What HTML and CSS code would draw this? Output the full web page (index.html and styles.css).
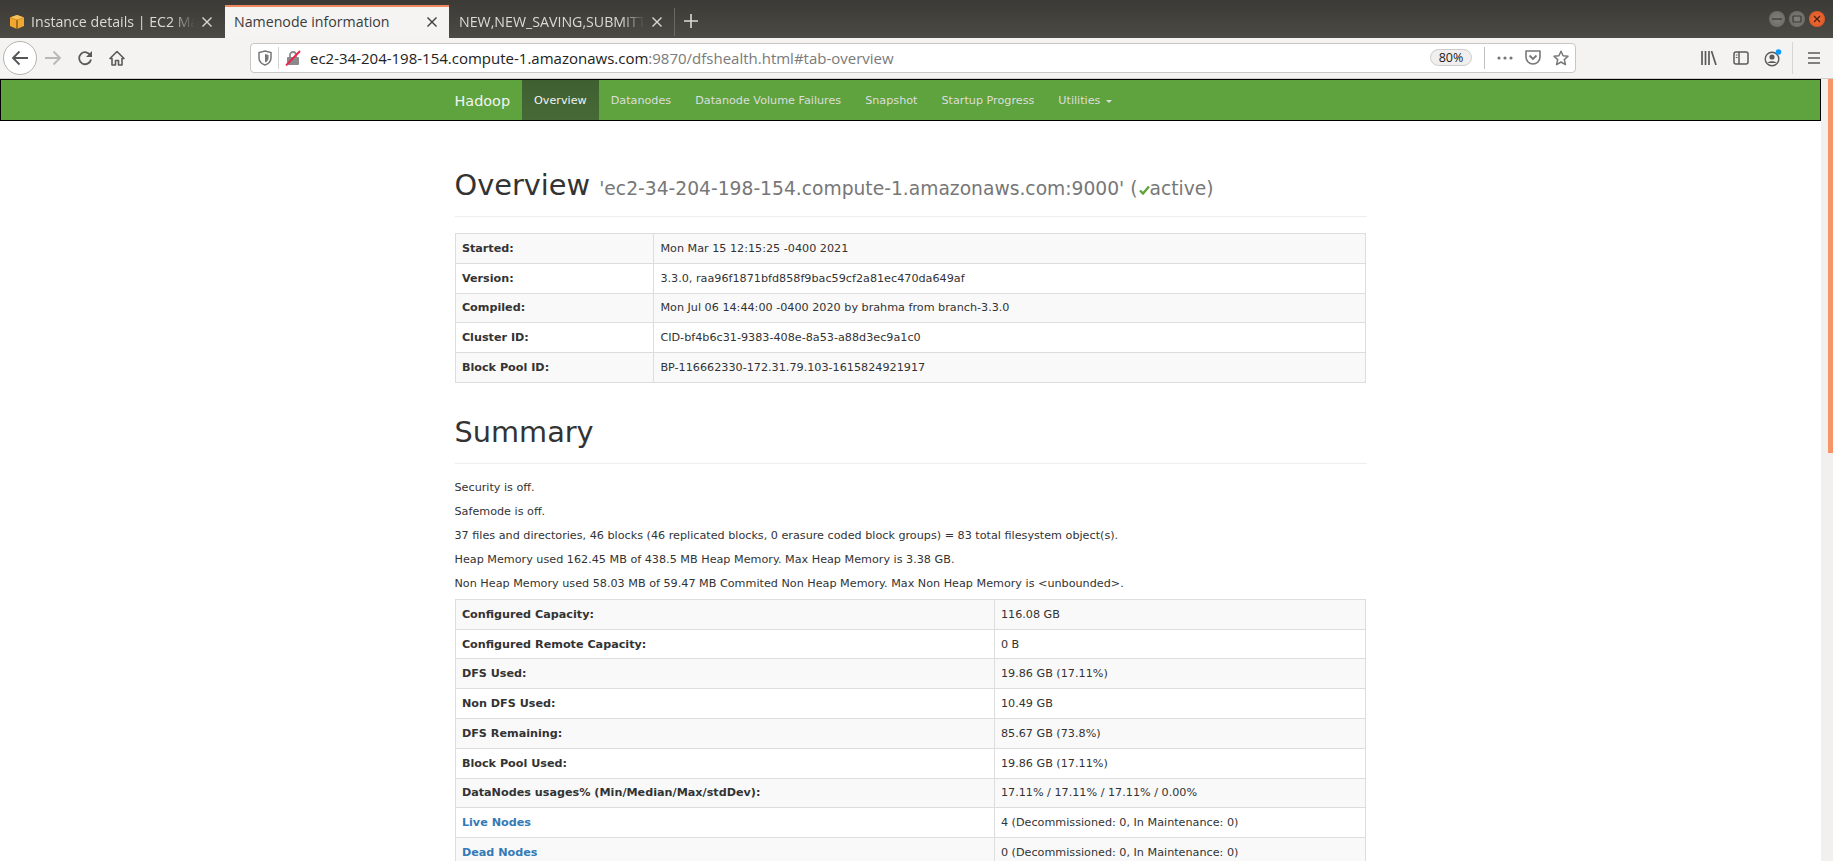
FILE: index.html
```
<!DOCTYPE html>
<html lang="en">
<head>
<meta charset="utf-8">
<title>Namenode information</title>
<link rel="stylesheet" href="styles.css">
</head>
<body>
<div class="titlebar">
  <div class="tab">
    <svg class="favicon" width="16" height="16" viewBox="0 0 16 16"><path d="M8 1 15 3.500V12L8 15 1 12V3.500Z" fill="#f2a82e"/><path d="M1 3.500 8 1 15 3.500 8 6Z" fill="#f8c25a"/><path d="M8 6V15" stroke="#6b4a16" stroke-width="1.200"/><path d="M1 3.500 8 6 15 3.500" fill="none" stroke="#c27f1e" stroke-width=".7"/></svg>
    <span class="tab-label">Instance details | EC2 Management Console</span>
    <svg class="tab-close" width="12" height="12" viewBox="0 0 12 12"><path d="M1.500 1.500 10.500 10.500M10.500 1.500 1.500 10.500" stroke="currentColor" stroke-width="1.400"/></svg>
  </div>
  <div class="tab tab-active">
    <span class="tab-label">Namenode information</span>
    <svg class="tab-close" width="12" height="12" viewBox="0 0 12 12"><path d="M1.500 1.500 10.500 10.500M10.500 1.500 1.500 10.500" stroke="currentColor" stroke-width="1.400"/></svg>
  </div>
  <div class="tab tab-last">
    <span class="tab-label">NEW,NEW_SAVING,SUBMITTED,ACCEPTED</span>
    <svg class="tab-close" width="12" height="12" viewBox="0 0 12 12"><path d="M1.500 1.500 10.500 10.500M10.500 1.500 1.500 10.500" stroke="currentColor" stroke-width="1.400"/></svg>
  </div>
  <svg class="new-tab" width="14" height="14" viewBox="0 0 14 14"><path d="M7 0V14M0 7H14" stroke="#dcdad5" stroke-width="1.600"/></svg>
  <div class="win-controls">
    <span class="win-btn"><svg width="10" height="10" viewBox="0 0 10 10"><path d="M0 5H10" stroke="#3c3b37" stroke-width="1.300"/></svg></span>
    <span class="win-btn"><svg width="10" height="10" viewBox="0 0 10 10"><rect x="1" y="2" width="8" height="6" rx="1" fill="none" stroke="#3c3b37" stroke-width="1.200"/></svg></span>
    <span class="win-btn win-close"><svg width="10" height="10" viewBox="0 0 10 10"><path d="M2 2 8 8M8 2 2 8" stroke="#4a2010" stroke-width="1.400"/></svg></span>
  </div>
</div>

<div class="toolbar">
  <span class="back-btn"><svg width="18" height="16" viewBox="0 0 18 16"><path d="M17 8H2M8.500 1.500 2 8l6.500 6.500" fill="none" stroke="#555" stroke-width="1.800"/></svg></span>
  <span class="tool-btn"><svg width="18" height="16" viewBox="0 0 18 16"><path d="M1 8H16M9.500 1.500 16 8l-6.500 6.500" fill="none" stroke="#b8b8b6" stroke-width="1.800"/></svg></span>
  <span class="tool-btn"><svg width="16" height="16" viewBox="0 0 16 16"><path d="M13.500 5.500A6 6 0 1 0 14 9.500" fill="none" stroke="#5b5b5b" stroke-width="1.800"/><path d="M15 1V7H9Z" fill="#5b5b5b"/></svg></span>
  <span class="tool-btn"><svg width="16" height="16" viewBox="0 0 16 16"><path d="M8 1.500 1 8.500H3V15H6.500V10.500H9.500V15H13V8.500H15Z" fill="none" stroke="#5b5b5b" stroke-width="1.600" stroke-linejoin="round"/></svg></span>

  <div class="urlbar">
    <span class="url-icon"><svg width="14" height="16" viewBox="0 0 14 16"><path d="M7 1 13 2.500V8C13 12 9.500 14.500 7 15 4.500 14.500 1 12 1 8V2.500Z" fill="none" stroke="#777" stroke-width="1.500"/><path d="M7 4 10.500 5V8C10.500 10.500 8.500 12 7 12.500Z" fill="#777"/></svg></span>
    <span class="url-sep"></span>
    <span class="url-icon"><svg width="16" height="16" viewBox="0 0 16 16"><rect x="2" y="7" width="12" height="8" rx="1" fill="#8a8a8a"/><path d="M5 7V5a3 3 0 0 1 6 0V7" fill="none" stroke="#8a8a8a" stroke-width="1.800"/><path d="M1 15.500 15 1" stroke="#f0204a" stroke-width="1.800"/></svg></span>
    <span class="url-text">ec2-34-204-198-154.compute-1.amazonaws.com<span class="url-dim">:9870/dfshealth.html#tab-overview</span></span>
    <span class="zoom-pill">80%</span>
    <span class="url-sep url-sep-wide"></span>
    <span class="page-btn"><svg width="16" height="4" viewBox="0 0 16 4"><circle cx="2" cy="2" r="1.600" fill="#777"/><circle cx="8" cy="2" r="1.600" fill="#777"/><circle cx="14" cy="2" r="1.600" fill="#777"/></svg></span>
    <span class="page-btn"><svg width="16" height="15" viewBox="0 0 16 15"><path d="M1 1H15V7A7 7 0 0 1 1 7Z" fill="none" stroke="#777" stroke-width="1.600" stroke-linejoin="round"/><path d="M4.500 5.500 8 9l3.500-3.500" fill="none" stroke="#777" stroke-width="1.800"/></svg></span>
    <span class="page-btn"><svg width="16" height="16" viewBox="0 0 16 16"><path d="M8 1.200 10.100 5.800 15 6.300 11.300 9.600 12.400 14.600 8 12 3.600 14.600 4.700 9.600 1 6.300 5.900 5.800Z" fill="none" stroke="#777" stroke-width="1.500" stroke-linejoin="round"/></svg></span>
  </div>

  <div class="tool-right">
    <span class="tool-btn"><svg width="16" height="14" viewBox="0 0 16 14"><path d="M1 0V14M4.500 0V14M8 0V14M10.500 0 15 14" fill="none" stroke="#5b5b5b" stroke-width="1.700"/></svg></span>
    <span class="tool-btn"><svg width="16" height="14" viewBox="0 0 16 14"><rect x="1" y="1" width="14" height="12" rx="2" fill="none" stroke="#5b5b5b" stroke-width="1.500"/><path d="M6 1V13" stroke="#5b5b5b" stroke-width="1.500"/><path d="M2.800 4H4.500M2.800 6.500H4.500" stroke="#5b5b5b" stroke-width="1"/></svg></span>
    <span class="tool-btn account"><svg width="18" height="18" viewBox="0 0 18 18"><circle cx="8" cy="10" r="6.800" fill="none" stroke="#5b5b5b" stroke-width="1.400"/><circle cx="8" cy="8" r="2.600" fill="#5b5b5b"/><path d="M3.500 14C4.500 11.500 11.500 11.500 12.500 14Z" fill="#5b5b5b"/><circle cx="14.500" cy="3" r="2.800" fill="#0a9dff"/></svg></span>
    <span class="tool-sep"></span>
    <span class="tool-btn menu-btn"><svg width="14" height="12" viewBox="0 0 14 12"><path d="M1 1H13M1 6H13M1 11H13" stroke="#5b5b5b" stroke-width="1.700"/></svg></span>
  </div>
</div>

<div class="viewport">
  <div class="page">
    <nav class="navbar">
      <div class="nav-inner">
        <a class="brand">Hadoop</a>
        <a class="nav-link nav-active">Overview</a>
        <a class="nav-link">Datanodes</a>
        <a class="nav-link">Datanode Volume Failures</a>
        <a class="nav-link">Snapshot</a>
        <a class="nav-link">Startup Progress</a>
        <a class="nav-link">Utilities <span class="caret"></span></a>
      </div>
    </nav>
    <main class="container">
      <div class="page-header">
        <h1 class="page-title">Overview <small class="title-small">'ec2-34-204-198-154.compute-1.amazonaws.com:9000' (<svg class="check" width="13" height="10" viewBox="0 0 11 10"><path d="M1 5.500 4 8.500 10 1.500" fill="none" stroke="#5fa33e" stroke-width="2.400"/></svg>active)</small></h1>
      </div>
      <table class="info-table">
        <tbody>
          <tr><th class="col-a">Started:</th><td>Mon Mar 15 12:15:25 -0400 2021</td></tr>
          <tr><th>Version:</th><td>3.3.0, raa96f1871bfd858f9bac59cf2a81ec470da649af</td></tr>
          <tr><th>Compiled:</th><td>Mon Jul 06 14:44:00 -0400 2020 by brahma from branch-3.3.0</td></tr>
          <tr><th>Cluster ID:</th><td>CID-bf4b6c31-9383-408e-8a53-a88d3ec9a1c0</td></tr>
          <tr><th>Block Pool ID:</th><td>BP-116662330-172.31.79.103-1615824921917</td></tr>
        </tbody>
      </table>
      <div class="page-header header-summary">
        <h1 class="page-title">Summary</h1>
      </div>
      <p class="line">Security is off.</p>
      <p class="line">Safemode is off.</p>
      <p class="line">37 files and directories, 46 blocks (46 replicated blocks, 0 erasure coded block groups) = 83 total filesystem object(s).</p>
      <p class="line">Heap Memory used 162.45 MB of 438.5 MB Heap Memory. Max Heap Memory is 3.38 GB.</p>
      <p class="line line-last">Non Heap Memory used 58.03 MB of 59.47 MB Commited Non Heap Memory. Max Non Heap Memory is &lt;unbounded&gt;.</p>
      <table class="info-table">
        <tbody>
          <tr><th class="col-b">Configured Capacity:</th><td>116.08 GB</td></tr>
          <tr><th>Configured Remote Capacity:</th><td>0 B</td></tr>
          <tr><th>DFS Used:</th><td>19.86 GB (17.11%)</td></tr>
          <tr><th>Non DFS Used:</th><td>10.49 GB</td></tr>
          <tr><th>DFS Remaining:</th><td>85.67 GB (73.8%)</td></tr>
          <tr><th>Block Pool Used:</th><td>19.86 GB (17.11%)</td></tr>
          <tr><th>DataNodes usages% (Min/Median/Max/stdDev):</th><td>17.11% / 17.11% / 17.11% / 0.00%</td></tr>
          <tr><th><a class="table-link">Live Nodes</a></th><td>4 (Decommissioned: 0, In Maintenance: 0)</td></tr>
          <tr><th><a class="table-link">Dead Nodes</a></th><td>0 (Decommissioned: 0, In Maintenance: 0)</td></tr>
        </tbody>
      </table>
    </main>
  </div>
  <div class="scrollbar"><div class="thumb"></div></div>
</div>
</body>
</html>
```
FILE: styles.css
```
* { box-sizing: border-box; }
html, body { height: 100%; }
body {
  margin: 0;
  height: 861px;
  overflow: hidden;
  display: flex;
  flex-direction: column;
  font-family: "DejaVu Sans", sans-serif;
  font-size: 11.2px;
  line-height: 16px;
  color: #333;
  background: #fff;
}

/* Title bar and tabs */
.titlebar {
  height: 38px;
  flex: none;
  display: flex;
  align-items: flex-end;
  background: linear-gradient(#3b3a36, #4b4a44);
  font-family: "Open Sans", "Noto Sans", sans-serif;
  font-size: 14.2px;
}
.tab {
  width: 225px;
  height: 33px;
  padding: 0 12px 0 9px;
  display: flex;
  align-items: center;
  color: #dcdad5;
}
.tab-active {
  width: 224px;
  height: 33px;
  background: #f5f4f2;
  color: #3b3b3b;
  border-top: 2px solid #f0875f;
  padding: 0 11px 1px 9px;
}
.tab-last {
  border-right: 1px solid #6a6964;
  padding-left: 10px;
  height: 28px;
  margin-bottom: 2px;
  width: 226px;
  padding-right: 11px;
}
.favicon { flex: none; margin-right: 6px; }
.tab-label {
  flex: 1;
  min-width: 0;
  white-space: nowrap;
  overflow: hidden;
  -webkit-mask-image: linear-gradient(to left, transparent 0, #000 24px);
  mask-image: linear-gradient(to left, transparent 0, #000 24px);
}
.tab-active .tab-label { -webkit-mask-image: none; mask-image: none; }
.tab-close { flex: none; margin-left: 6px; color: currentColor; }
.new-tab { margin: 0 0 10px 9px; }
.win-controls {
  margin-left: auto;
  padding: 0 8px 11px 0;
  display: flex;
  gap: 4px;
  align-self: flex-end;
}
.win-btn {
  width: 16px;
  height: 16px;
  border-radius: 50%;
  background: radial-gradient(#807f7a, #67665f);
  display: flex;
  align-items: center;
  justify-content: center;
}
.win-close { background: radial-gradient(#f0703a, #d8501f); }

/* Toolbar */
.toolbar {
  height: 41px;
  flex: none;
  display: flex;
  align-items: center;
  padding: 0 0 1px 3px;
  background: #f4f3f1;
  border-bottom: 1px solid #cfcdca;
}
.back-btn {
  width: 34px;
  height: 34px;
  border: 1px solid #b5b3b0;
  border-radius: 50%;
  background: #fff;
  display: flex;
  align-items: center;
  justify-content: center;
}
.tool-btn {
  width: 32px;
  height: 32px;
  flex: none;
  display: flex;
  align-items: center;
  justify-content: center;
}
.urlbar {
  width: 1326px;
  height: 30px;
  margin-left: 117px;
  flex: none;
  display: flex;
  align-items: center;
  background: #fff;
  border: 1px solid #c9c7c4;
  border-radius: 4px;
  padding-left: 4px;
  font-family: "Open Sans", "Noto Sans", sans-serif;
  font-size: 15px;
  color: #222;
}
.url-icon {
  width: 20px;
  display: flex;
  justify-content: center;
}
.url-sep {
  width: 1px;
  height: 22px;
  background: #d5d3d0;
  margin: 0 4px 0 3px;
}
.url-sep-wide { margin: 0 6px 0 12px; background: #c2c0bd; }
.url-text { margin-left: 7px; white-space: nowrap; }
.url-dim { color: #7a7a7a; }
.zoom-pill {
  margin-left: auto;
  width: 42px;
  height: 17px;
  border: 1px solid #ccc;
  border-radius: 9px;
  background: #f0efed;
  font-size: 12.500px;
  line-height: 15px;
  text-align: center;
}
.page-btn {
  width: 28px;
  display: flex;
  justify-content: center;
}
.tool-right {
  margin-left: 117px;
  display: flex;
  align-items: center;
}
.tool-sep {
  width: 1px;
  height: 32px;
  margin-left: 3px;
  background: #d8d6d3;
}
.menu-btn { margin-left: 5px; }

/* Page */
.viewport {
  flex: 1;
  min-height: 0;
  display: flex;
}
.page { flex: 1; min-width: 0; overflow: hidden; }
.scrollbar {
  width: 12px;
  flex: none;
  display: flex;
  justify-content: flex-end;
  background: #f1f0ee;
}
.thumb { width: 5px; height: 374px; background: #f79468; }

.navbar {
  height: 42px;
  background: #5fa33e;
  border: 1px solid #000;
}
.nav-inner {
  width: 936px;
  height: 40px;
  margin: 0 auto;
  padding: 0 12px;
  display: flex;
}
.brand {
  font-size: 14.400px;
  padding: 2px 12px 0 0;
  line-height: 38px;
  color: #f3f3f3;
}
.nav-link {
  padding: 2px 12px 0;
  line-height: 38px;
  color: #ddd;
}
.nav-active {
  background: linear-gradient(#3f5f31, #466a36);
  color: #f2f2f2;
}
.caret {
  display: inline-block;
  width: 0;
  height: 0;
  margin-left: 2px;
  vertical-align: middle;
  border-top: 3px solid #ddd;
  border-left: 3px solid transparent;
  border-right: 3px solid transparent;
}

.container {
  width: 936px;
  margin: 0 auto;
  padding: 0 12px;
}
.page-header {
  margin: 33px 0 16px;
  padding-bottom: 15.200px;
  border-bottom: 1px solid #eee;
  height: 63px;
  display: flex;
  align-items: flex-end;
}
.header-summary { margin-top: 18px; }
.page-title {
  margin: 0;
  font-size: 28.800px;
  font-weight: 500;
  line-height: 32px;
  color: #333;
}
.title-small {
  font-size: 18.700px;
  line-height: 1;
  font-weight: 400;
  color: #777;
}
.check { margin-right: -1px; }

.info-table {
  width: 911px;
  table-layout: fixed;
  border-collapse: collapse;
  margin-bottom: 16px;
}
.info-table th,
.info-table td {
  padding: 6.900px 6.400px 5.900px;
  border: 1px solid #ddd;
  text-align: left;
  vertical-align: top;
  line-height: 16px;
}
.info-table tr:nth-child(odd) { background: #f9f9f9; }
.info-table th { font-weight: 700; }
.col-a { width: 198.500px; }
.col-b { width: 539px; }
.table-link { color: #337ab7; }
.line { margin: 0 0 8px; }
.line-last { margin-bottom: 7px; }
```
